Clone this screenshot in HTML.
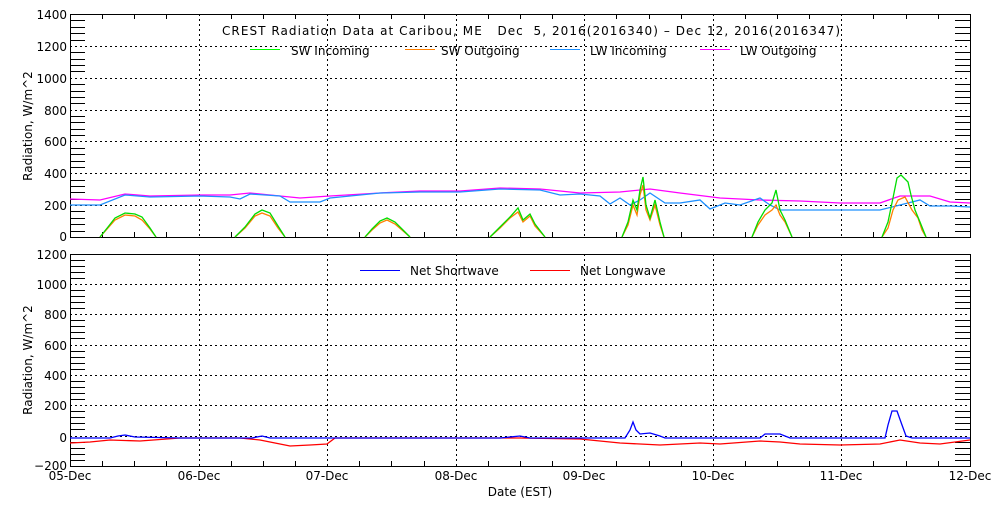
<!DOCTYPE html>
<html><head><style>
html,body{margin:0;padding:0;background:#fff;}
svg text{font-family:"DejaVu Sans","Liberation Sans",sans-serif;font-size:12px;fill:#000;white-space:pre;}
</style></head><body>
<svg width="1000" height="500" viewBox="0 0 1000 500" xmlns="http://www.w3.org/2000/svg">
<g stroke="#000" stroke-width="1" fill="none" shape-rendering="crispEdges">
<rect x="70.5" y="14.5" width="900" height="223"/>
<rect x="70.5" y="254.5" width="900" height="212"/>
<g stroke-dasharray="2,3">
<path d="M70 46.5H970M70 78.5H970M70 110.5H970M70 141.5H970M70 173.5H970M70 205.5H970"/>
<path d="M199.5 14V237M327.5 14V237M456.5 14V237M584.5 14V237M713.5 14V237M841.5 14V237"/>
<path d="M70 284.5H970M70 314.5H970M70 345.5H970M70 375.5H970M70 405.5H970M70 436.5H970"/>
<path d="M199.5 254V466M327.5 254V466M456.5 254V466M584.5 254V466M713.5 254V466M841.5 254V466"/>
</g>
<path id="yt1" d="M70 20.5h15M70 27.5h15M70 33.5h15M70 40.5h15M70 52.5h15M70 59.5h15M70 65.5h15M70 71.5h15M70 84.5h15M70 91.5h15M70 97.5h15M70 103.5h15M70 116.5h15M70 122.5h15M70 129.5h15M70 135.5h15M70 148.5h15M70 154.5h15M70 161.5h15M70 167.5h15M70 180.5h15M70 186.5h15M70 192.5h15M70 199.5h15M70 211.5h15M70 218.5h15M70 224.5h15M70 231.5h15"/>
<use href="#yt1" transform="translate(885,0)"/>
<path id="yt2" d="M70 260.5h15M70 266.5h15M70 272.5h15M70 278.5h15M70 290.5h15M70 296.5h15M70 302.5h15M70 308.5h15M70 320.5h15M70 326.5h15M70 332.5h15M70 338.5h15M70 351.5h15M70 357.5h15M70 363.5h15M70 369.5h15M70 381.5h15M70 387.5h15M70 393.5h15M70 399.5h15M70 411.5h15M70 417.5h15M70 423.5h15M70 429.5h15M70 442.5h15M70 448.5h15M70 454.5h15M70 460.5h15"/>
<use href="#yt2" transform="translate(885,0)"/>
<path id="xt" d="M102.5 237v-5M134.5 237v-5M166.5 237v-5M231.5 237v-5M263.5 237v-5M295.5 237v-5M359.5 237v-5M391.5 237v-5M424.5 237v-5M488.5 237v-5M520.5 237v-5M552.5 237v-5M616.5 237v-5M649.5 237v-5M681.5 237v-5M745.5 237v-5M777.5 237v-5M809.5 237v-5M873.5 237v-5M906.5 237v-5M938.5 237v-5"/>
<use href="#xt" transform="translate(0,229)"/>
<use href="#xt" transform="translate(0,-218)"/>
</g>
<g fill="none" stroke-width="1.3">
<polyline stroke="#ff00ff" points="70,199 100,200 125,194 150,196 200,195 230,195 250,193 280,196 300,198 330,196 380,193 420,191 460,191 500,188 540,189 580,193 620,192 650,189 680,193 720,198 760,200 800,201 840,203 880,203 900,196 930,196 950,202 970,203"/>
<polyline stroke="#1e90ff" points="70,205 100,205 125,195 150,197 200,196 230,197 240,199 250,194 280,196 290,202 320,202 330,198 380,193 420,192 460,192 500,189 540,190 560,195 580,194 600,196 610,204 620,198 630,205 640,200 650,193 665,203 680,203 700,200 710,209 725,203 740,205 760,198 770,205 780,210 840,210 880,210 900,205 920,200 930,206 950,206 970,207"/>
<polyline stroke="#ff8000" points="100,237 108,228 115,220 125,215 135,216 142,220 150,229 156,237"/>
<polyline stroke="#00dd00" points="100,237 108,227 115,218 125,213 135,214 142,217 150,228 156,237"/>
<polyline stroke="#ff8000" points="235,237 245,228 255,216 262,213 270,216 278,228 285,237"/>
<polyline stroke="#00dd00" points="235,237 245,227 255,214 262,210 270,213 278,226 285,237"/>
<polyline stroke="#ff8000" points="365,237 372,230 380,223 387,220 395,224 402,230 410,237"/>
<polyline stroke="#00dd00" points="365,237 372,229 380,221 387,218 395,222 402,229 410,237"/>
<polyline stroke="#ff8000" points="490,237 500,228 510,218 518,212 523,222 530,216 535,226 545,237"/>
<polyline stroke="#00dd00" points="490,237 500,227 510,217 518,208 523,220 530,214 535,224 545,237"/>
<polyline stroke="#ff8000" points="622,237 628,225 633,205 637,215 640,195 643,185 646,210 650,220 655,205 660,225 664,237"/>
<polyline stroke="#00dd00" points="622,237 628,222 633,200 637,210 640,190 643,177 646,205 650,218 655,200 660,222 664,237"/>
<polyline stroke="#ff8000" points="752,237 758,225 765,215 772,210 776,205 780,215 785,222 792,237"/>
<polyline stroke="#00dd00" points="752,237 758,222 765,210 772,203 776,190 780,210 785,220 792,237"/>
<polyline stroke="#ff8000" points="882,237 888,228 893,210 898,200 905,197 912,210 918,218 922,230 926,237"/>
<polyline stroke="#00dd00" points="882,237 888,222 893,198 897,178 901,175 908,182 911,195 915,210 920,222 926,237"/>
<polyline stroke="#ff0000" points="70,443 90,442 110,440 140,441 180,438 200,438 240,438 260,440 275,443 290,446 310,445 327,444 335,438 456,438 520,438 580,439 620,443 660,445 700,443 720,444 760,441 780,442 800,444 840,445 880,444 900,440 920,443 940,444 970,440"/>
<polyline stroke="#0000ff" points="70,438 110,438 118,436 125,435 135,437 180,438 252,438 262,436 270,438 330,438 500,438 520,436 530,438 625,438 630,430 633,422 636,430 640,434 650,433 660,436 665,438 760,438 765,434 780,434 790,438 885,438 888,425 892,411 897,411 902,425 906,436 912,438 970,438"/>
</g>
<g shape-rendering="crispEdges" stroke-width="1">
<line x1="250" y1="49.5" x2="280" y2="49.5" stroke="#00ff00"/>
<line x1="405" y1="49.5" x2="435" y2="49.5" stroke="#ff8000"/>
<line x1="550" y1="49.5" x2="580" y2="49.5" stroke="#1e90ff"/>
<line x1="700" y1="49.5" x2="730" y2="49.5" stroke="#ff00ff"/>
<line x1="360" y1="270.5" x2="400" y2="270.5" stroke="#0000ff"/>
<line x1="530" y1="270.5" x2="570" y2="270.5" stroke="#ff0000"/>
</g>
<text x="222" y="35" textLength="618" lengthAdjust="spacing" xml:space="preserve">CREST Radiation Data at Caribou, ME   Dec  5, 2016(2016340) – Dec 12, 2016(2016347)</text>
<text x="291" y="55">SW Incoming</text>
<text x="441" y="55">SW Outgoing</text>
<text x="590" y="55">LW Incoming</text>
<text x="740" y="55">LW Outgoing</text>
<text x="410" y="275">Net Shortwave</text>
<text x="580" y="275">Net Longwave</text>
<g text-anchor="end">
<text x="67" y="19">1400</text><text x="67" y="51">1200</text><text x="67" y="83">1000</text><text x="67" y="115">800</text><text x="67" y="146">600</text><text x="67" y="178">400</text><text x="67" y="210">200</text><text x="67" y="241">0</text>
<text x="67" y="259">1200</text><text x="67" y="289">1000</text><text x="67" y="319">800</text><text x="67" y="350">600</text><text x="67" y="380">400</text><text x="67" y="410">200</text><text x="67" y="442">0</text><text x="67" y="470">−200</text>
</g>
<g text-anchor="middle">
<text x="70" y="480">05-Dec</text><text x="199" y="480">06-Dec</text><text x="327" y="480">07-Dec</text><text x="456" y="480">08-Dec</text><text x="584" y="480">09-Dec</text><text x="713" y="480">10-Dec</text><text x="841" y="480">11-Dec</text><text x="970" y="480">12-Dec</text>
<text x="520" y="496">Date (EST)</text>
<text transform="translate(32,126) rotate(-90)">Radiation, W/m^2</text>
<text transform="translate(32,360) rotate(-90)">Radiation, W/m^2</text>
</g>
</svg>
</body></html>
